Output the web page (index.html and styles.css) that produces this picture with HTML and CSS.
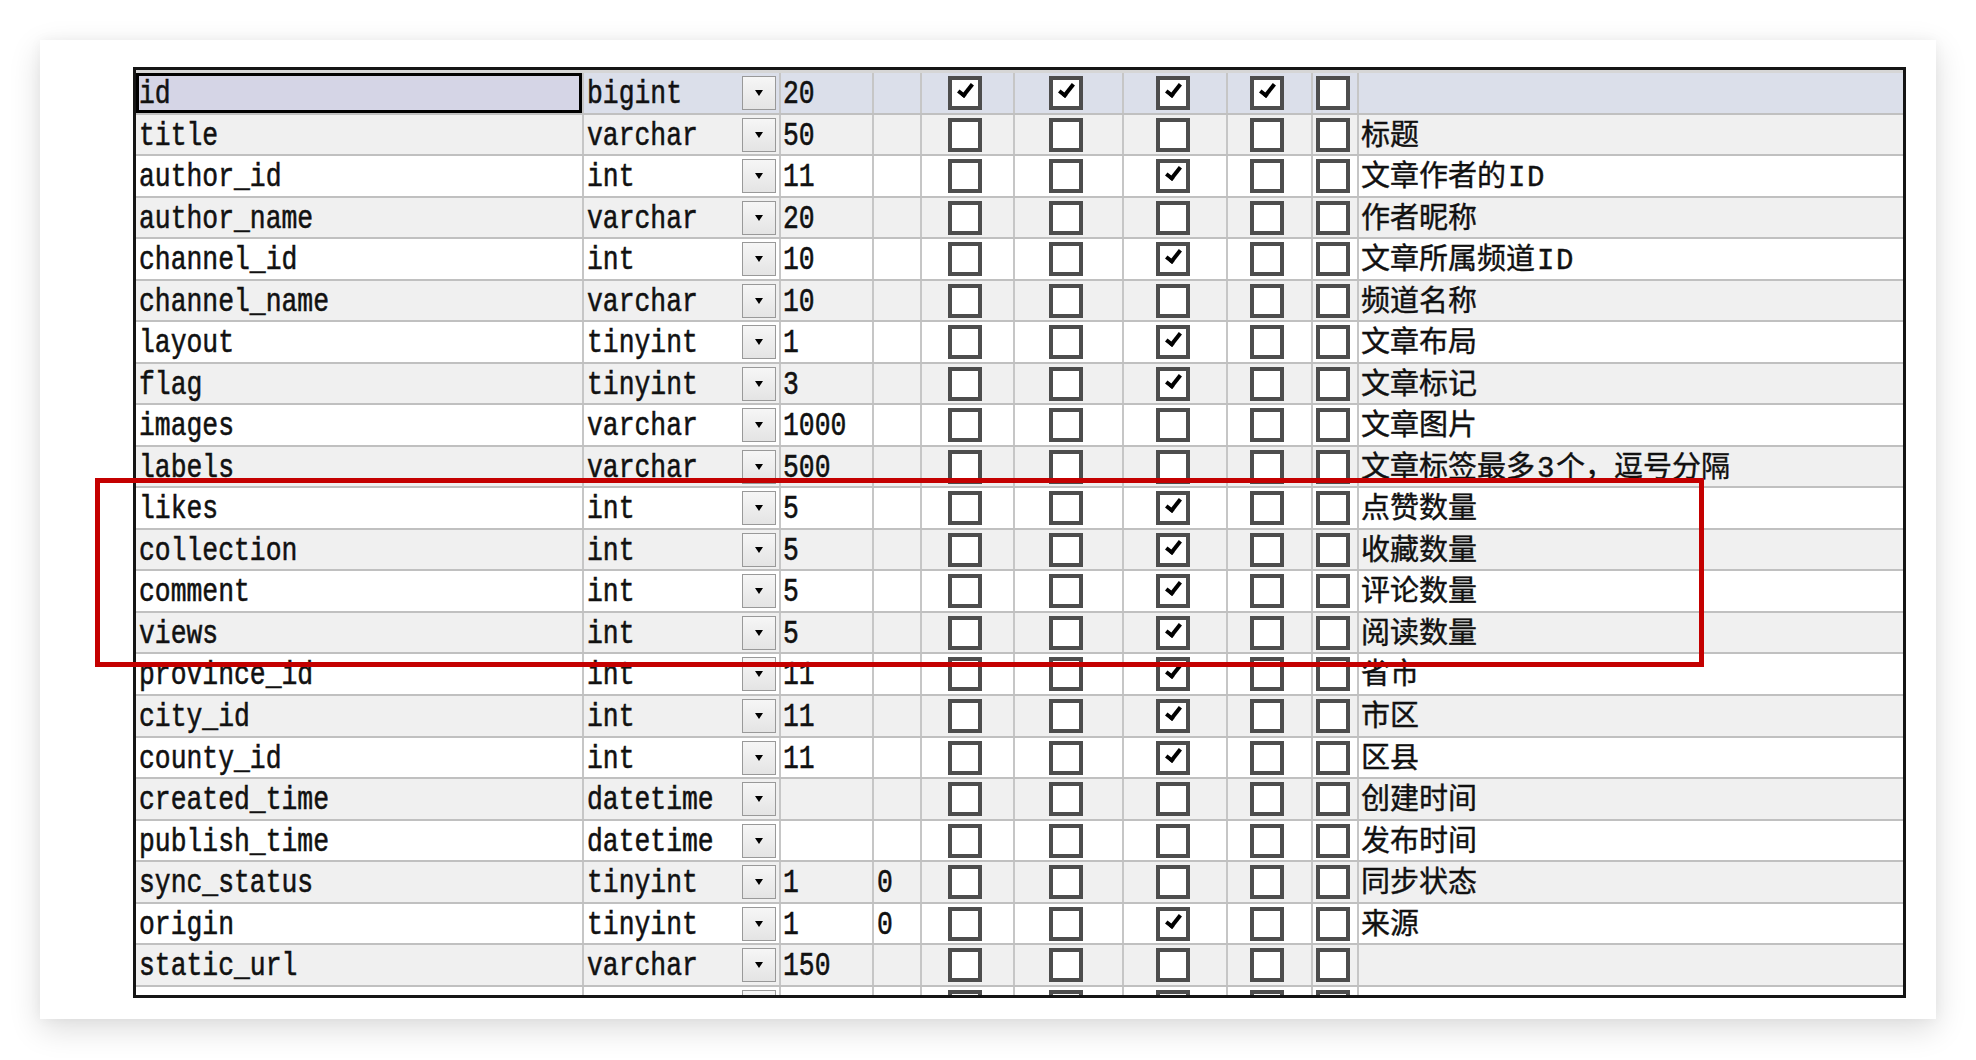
FILE: index.html
```html
<!DOCTYPE html>
<html lang="zh-CN">
<head>
<meta charset="utf-8">
<title>表结构</title>
<link rel="stylesheet" href="styles.css">
</head>
<body>
<div class="card">
  <div class="grid">
    <div class="row sel">
      <div class="c name"><span class="t">id</span></div>
      <div class="c type"><span class="t">bigint</span><i class="dd"></i></div>
      <div class="c len"><span class="t">20</span></div>
      <div class="c dec"></div>
      <div class="c cb"><i class="box on"></i></div>
      <div class="c cb"><i class="box on"></i></div>
      <div class="c cb"><i class="box on"></i></div>
      <div class="c cb"><i class="box on"></i></div>
      <div class="c cb"><i class="box"></i></div>
      <div class="c cmt"></div>
    </div>
    <div class="row">
      <div class="c name"><span class="t">title</span></div>
      <div class="c type"><span class="t">varchar</span><i class="dd"></i></div>
      <div class="c len"><span class="t">50</span></div>
      <div class="c dec"></div>
      <div class="c cb"><i class="box"></i></div>
      <div class="c cb"><i class="box"></i></div>
      <div class="c cb"><i class="box"></i></div>
      <div class="c cb"><i class="box"></i></div>
      <div class="c cb"><i class="box"></i></div>
      <div class="c cmt"><span class="t2">标题</span></div>
    </div>
    <div class="row">
      <div class="c name"><span class="t">author_id</span></div>
      <div class="c type"><span class="t">int</span><i class="dd"></i></div>
      <div class="c len"><span class="t">11</span></div>
      <div class="c dec"></div>
      <div class="c cb"><i class="box"></i></div>
      <div class="c cb"><i class="box"></i></div>
      <div class="c cb"><i class="box on"></i></div>
      <div class="c cb"><i class="box"></i></div>
      <div class="c cb"><i class="box"></i></div>
      <div class="c cmt"><span class="t2">文章作者的<span class="lat">ID</span></span></div>
    </div>
    <div class="row">
      <div class="c name"><span class="t">author_name</span></div>
      <div class="c type"><span class="t">varchar</span><i class="dd"></i></div>
      <div class="c len"><span class="t">20</span></div>
      <div class="c dec"></div>
      <div class="c cb"><i class="box"></i></div>
      <div class="c cb"><i class="box"></i></div>
      <div class="c cb"><i class="box"></i></div>
      <div class="c cb"><i class="box"></i></div>
      <div class="c cb"><i class="box"></i></div>
      <div class="c cmt"><span class="t2">作者昵称</span></div>
    </div>
    <div class="row">
      <div class="c name"><span class="t">channel_id</span></div>
      <div class="c type"><span class="t">int</span><i class="dd"></i></div>
      <div class="c len"><span class="t">10</span></div>
      <div class="c dec"></div>
      <div class="c cb"><i class="box"></i></div>
      <div class="c cb"><i class="box"></i></div>
      <div class="c cb"><i class="box on"></i></div>
      <div class="c cb"><i class="box"></i></div>
      <div class="c cb"><i class="box"></i></div>
      <div class="c cmt"><span class="t2">文章所属频道<span class="lat">ID</span></span></div>
    </div>
    <div class="row">
      <div class="c name"><span class="t">channel_name</span></div>
      <div class="c type"><span class="t">varchar</span><i class="dd"></i></div>
      <div class="c len"><span class="t">10</span></div>
      <div class="c dec"></div>
      <div class="c cb"><i class="box"></i></div>
      <div class="c cb"><i class="box"></i></div>
      <div class="c cb"><i class="box"></i></div>
      <div class="c cb"><i class="box"></i></div>
      <div class="c cb"><i class="box"></i></div>
      <div class="c cmt"><span class="t2">频道名称</span></div>
    </div>
    <div class="row">
      <div class="c name"><span class="t">layout</span></div>
      <div class="c type"><span class="t">tinyint</span><i class="dd"></i></div>
      <div class="c len"><span class="t">1</span></div>
      <div class="c dec"></div>
      <div class="c cb"><i class="box"></i></div>
      <div class="c cb"><i class="box"></i></div>
      <div class="c cb"><i class="box on"></i></div>
      <div class="c cb"><i class="box"></i></div>
      <div class="c cb"><i class="box"></i></div>
      <div class="c cmt"><span class="t2">文章布局</span></div>
    </div>
    <div class="row">
      <div class="c name"><span class="t">flag</span></div>
      <div class="c type"><span class="t">tinyint</span><i class="dd"></i></div>
      <div class="c len"><span class="t">3</span></div>
      <div class="c dec"></div>
      <div class="c cb"><i class="box"></i></div>
      <div class="c cb"><i class="box"></i></div>
      <div class="c cb"><i class="box on"></i></div>
      <div class="c cb"><i class="box"></i></div>
      <div class="c cb"><i class="box"></i></div>
      <div class="c cmt"><span class="t2">文章标记</span></div>
    </div>
    <div class="row">
      <div class="c name"><span class="t">images</span></div>
      <div class="c type"><span class="t">varchar</span><i class="dd"></i></div>
      <div class="c len"><span class="t">1000</span></div>
      <div class="c dec"></div>
      <div class="c cb"><i class="box"></i></div>
      <div class="c cb"><i class="box"></i></div>
      <div class="c cb"><i class="box"></i></div>
      <div class="c cb"><i class="box"></i></div>
      <div class="c cb"><i class="box"></i></div>
      <div class="c cmt"><span class="t2">文章图片</span></div>
    </div>
    <div class="row">
      <div class="c name"><span class="t">labels</span></div>
      <div class="c type"><span class="t">varchar</span><i class="dd"></i></div>
      <div class="c len"><span class="t">500</span></div>
      <div class="c dec"></div>
      <div class="c cb"><i class="box"></i></div>
      <div class="c cb"><i class="box"></i></div>
      <div class="c cb"><i class="box"></i></div>
      <div class="c cb"><i class="box"></i></div>
      <div class="c cb"><i class="box"></i></div>
      <div class="c cmt"><span class="t2">文章标签最多<span class="lat">3</span>个，逗号分隔</span></div>
    </div>
    <div class="row">
      <div class="c name"><span class="t">likes</span></div>
      <div class="c type"><span class="t">int</span><i class="dd"></i></div>
      <div class="c len"><span class="t">5</span></div>
      <div class="c dec"></div>
      <div class="c cb"><i class="box"></i></div>
      <div class="c cb"><i class="box"></i></div>
      <div class="c cb"><i class="box on"></i></div>
      <div class="c cb"><i class="box"></i></div>
      <div class="c cb"><i class="box"></i></div>
      <div class="c cmt"><span class="t2">点赞数量</span></div>
    </div>
    <div class="row">
      <div class="c name"><span class="t">collection</span></div>
      <div class="c type"><span class="t">int</span><i class="dd"></i></div>
      <div class="c len"><span class="t">5</span></div>
      <div class="c dec"></div>
      <div class="c cb"><i class="box"></i></div>
      <div class="c cb"><i class="box"></i></div>
      <div class="c cb"><i class="box on"></i></div>
      <div class="c cb"><i class="box"></i></div>
      <div class="c cb"><i class="box"></i></div>
      <div class="c cmt"><span class="t2">收藏数量</span></div>
    </div>
    <div class="row">
      <div class="c name"><span class="t">comment</span></div>
      <div class="c type"><span class="t">int</span><i class="dd"></i></div>
      <div class="c len"><span class="t">5</span></div>
      <div class="c dec"></div>
      <div class="c cb"><i class="box"></i></div>
      <div class="c cb"><i class="box"></i></div>
      <div class="c cb"><i class="box on"></i></div>
      <div class="c cb"><i class="box"></i></div>
      <div class="c cb"><i class="box"></i></div>
      <div class="c cmt"><span class="t2">评论数量</span></div>
    </div>
    <div class="row">
      <div class="c name"><span class="t">views</span></div>
      <div class="c type"><span class="t">int</span><i class="dd"></i></div>
      <div class="c len"><span class="t">5</span></div>
      <div class="c dec"></div>
      <div class="c cb"><i class="box"></i></div>
      <div class="c cb"><i class="box"></i></div>
      <div class="c cb"><i class="box on"></i></div>
      <div class="c cb"><i class="box"></i></div>
      <div class="c cb"><i class="box"></i></div>
      <div class="c cmt"><span class="t2">阅读数量</span></div>
    </div>
    <div class="row">
      <div class="c name"><span class="t">province_id</span></div>
      <div class="c type"><span class="t">int</span><i class="dd"></i></div>
      <div class="c len"><span class="t">11</span></div>
      <div class="c dec"></div>
      <div class="c cb"><i class="box"></i></div>
      <div class="c cb"><i class="box"></i></div>
      <div class="c cb"><i class="box on"></i></div>
      <div class="c cb"><i class="box"></i></div>
      <div class="c cb"><i class="box"></i></div>
      <div class="c cmt"><span class="t2">省市</span></div>
    </div>
    <div class="row">
      <div class="c name"><span class="t">city_id</span></div>
      <div class="c type"><span class="t">int</span><i class="dd"></i></div>
      <div class="c len"><span class="t">11</span></div>
      <div class="c dec"></div>
      <div class="c cb"><i class="box"></i></div>
      <div class="c cb"><i class="box"></i></div>
      <div class="c cb"><i class="box on"></i></div>
      <div class="c cb"><i class="box"></i></div>
      <div class="c cb"><i class="box"></i></div>
      <div class="c cmt"><span class="t2">市区</span></div>
    </div>
    <div class="row">
      <div class="c name"><span class="t">county_id</span></div>
      <div class="c type"><span class="t">int</span><i class="dd"></i></div>
      <div class="c len"><span class="t">11</span></div>
      <div class="c dec"></div>
      <div class="c cb"><i class="box"></i></div>
      <div class="c cb"><i class="box"></i></div>
      <div class="c cb"><i class="box on"></i></div>
      <div class="c cb"><i class="box"></i></div>
      <div class="c cb"><i class="box"></i></div>
      <div class="c cmt"><span class="t2">区县</span></div>
    </div>
    <div class="row">
      <div class="c name"><span class="t">created_time</span></div>
      <div class="c type"><span class="t">datetime</span><i class="dd"></i></div>
      <div class="c len"></div>
      <div class="c dec"></div>
      <div class="c cb"><i class="box"></i></div>
      <div class="c cb"><i class="box"></i></div>
      <div class="c cb"><i class="box"></i></div>
      <div class="c cb"><i class="box"></i></div>
      <div class="c cb"><i class="box"></i></div>
      <div class="c cmt"><span class="t2">创建时间</span></div>
    </div>
    <div class="row">
      <div class="c name"><span class="t">publish_time</span></div>
      <div class="c type"><span class="t">datetime</span><i class="dd"></i></div>
      <div class="c len"></div>
      <div class="c dec"></div>
      <div class="c cb"><i class="box"></i></div>
      <div class="c cb"><i class="box"></i></div>
      <div class="c cb"><i class="box"></i></div>
      <div class="c cb"><i class="box"></i></div>
      <div class="c cb"><i class="box"></i></div>
      <div class="c cmt"><span class="t2">发布时间</span></div>
    </div>
    <div class="row">
      <div class="c name"><span class="t">sync_status</span></div>
      <div class="c type"><span class="t">tinyint</span><i class="dd"></i></div>
      <div class="c len"><span class="t">1</span></div>
      <div class="c dec"><span class="t">0</span></div>
      <div class="c cb"><i class="box"></i></div>
      <div class="c cb"><i class="box"></i></div>
      <div class="c cb"><i class="box"></i></div>
      <div class="c cb"><i class="box"></i></div>
      <div class="c cb"><i class="box"></i></div>
      <div class="c cmt"><span class="t2">同步状态</span></div>
    </div>
    <div class="row">
      <div class="c name"><span class="t">origin</span></div>
      <div class="c type"><span class="t">tinyint</span><i class="dd"></i></div>
      <div class="c len"><span class="t">1</span></div>
      <div class="c dec"><span class="t">0</span></div>
      <div class="c cb"><i class="box"></i></div>
      <div class="c cb"><i class="box"></i></div>
      <div class="c cb"><i class="box on"></i></div>
      <div class="c cb"><i class="box"></i></div>
      <div class="c cb"><i class="box"></i></div>
      <div class="c cmt"><span class="t2">来源</span></div>
    </div>
    <div class="row">
      <div class="c name"><span class="t">static_url</span></div>
      <div class="c type"><span class="t">varchar</span><i class="dd"></i></div>
      <div class="c len"><span class="t">150</span></div>
      <div class="c dec"></div>
      <div class="c cb"><i class="box"></i></div>
      <div class="c cb"><i class="box"></i></div>
      <div class="c cb"><i class="box"></i></div>
      <div class="c cb"><i class="box"></i></div>
      <div class="c cb"><i class="box"></i></div>
      <div class="c cmt"></div>
    </div>
    <div class="row">
      <div class="c name"></div>
      <div class="c type"><span class="t"></span><i class="dd"></i></div>
      <div class="c len"></div>
      <div class="c dec"></div>
      <div class="c cb"><i class="box"></i></div>
      <div class="c cb"><i class="box"></i></div>
      <div class="c cb"><i class="box"></i></div>
      <div class="c cb"><i class="box"></i></div>
      <div class="c cb"><i class="box"></i></div>
      <div class="c cmt"></div>
    </div>
  </div>
  <div class="mark"></div>
</div>
</body>
</html>
```

FILE: styles.css
```css
html, body {
  margin: 0;
  padding: 0;
  background: #ffffff;
}

body {
  width: 1976px;
  height: 1060px;
  overflow: hidden;
  font-family: "Liberation Mono", "Noto Sans CJK SC", monospace;
  color: #111;
}

.card {
  position: relative;
  box-sizing: border-box;
  margin: 40px 0 0 40px;
  width: 1896px;
  height: 979px;
  padding: 27px 0 0 93px;
  background: #ffffff;
  box-shadow: 0 10px 30px rgba(0, 0, 0, 0.14), 0 0 12px rgba(0, 0, 0, 0.04);
}

.grid {
  box-sizing: border-box;
  width: 1773px;
  height: 931px;
  border: 3px solid #151515;
  padding-top: 3px;
  background: #d6d6d6;
  overflow: hidden;
}

.row {
  display: grid;
  grid-template-columns: 446px 197px 93px 48px 93px 109px 104px 85px 46px 1fr;
  box-sizing: border-box;
  height: 41.54px;
  border-bottom: 2px solid #c0c0c0;
  background: #ffffff;
}

.row:nth-child(even) {
  background: #f0f0f0;
}

.row.sel {
  background: #dbdfea;
}

.c {
  display: flex;
  align-items: flex-start;
  min-width: 0;
  overflow: hidden;
  white-space: nowrap;
  border-left: 2px solid #c6c6c6;
  font-size: 26.4px;
}

.name {
  border-left: none;
  padding-left: 3px;
}

.row.sel .name {
  background: #d5d5e6;
  box-shadow: inset 0 0 0 3px #000;
}

.type {
  padding: 0 3px 0 3px;
}

.len {
  padding-left: 2px;
}

.dec {
  padding-left: 3px;
}

.t {
  display: inline-block;
  margin-top: 10px;
  line-height: 26px;
  transform: scaleY(1.25);
  transform-origin: 0 20px;
  -webkit-text-stroke: 0.45px #111;
}

.dd {
  display: flex;
  align-items: center;
  justify-content: center;
  box-sizing: border-box;
  margin: 3px 0 0 auto;
  width: 34px;
  height: 34px;
  border: 1px solid #999;
  background: linear-gradient(#f6f6f6, #e4e4e4);
}

.dd::after {
  content: "";
  width: 0;
  height: 0;
  border-left: 4.5px solid transparent;
  border-right: 4.5px solid transparent;
  border-top: 6px solid #000;
}

.cb {
  justify-content: center;
  padding: 3px 5px 0 0;
}

.box {
  position: relative;
  display: block;
  box-sizing: border-box;
  width: 34px;
  height: 34px;
  border: 4px solid #4d4d4d;
  background: #fff;
}

.box.on::after {
  content: "";
  position: absolute;
  left: 9px;
  top: 1px;
  width: 5px;
  height: 12px;
  border: solid #000;
  border-width: 0 4px 4px 0;
  transform: rotate(38deg);
}

.cmt {
  padding-left: 2px;
  font-size: 29px;
}

.t2 {
  display: inline-block;
  margin-top: 8px;
  line-height: 29px;
  font-family: "Liberation Mono", "Noto Sans CJK SC", monospace;
  -webkit-text-stroke: 0.4px #111;
}

.lat {
  letter-spacing: 1.5px;
  margin-left: 2px;
}

.mark {
  position: absolute;
  left: 55px;
  top: 438px;
  box-sizing: border-box;
  width: 1609px;
  height: 189px;
  border: 5px solid #c40000;
  pointer-events: none;
}
```
